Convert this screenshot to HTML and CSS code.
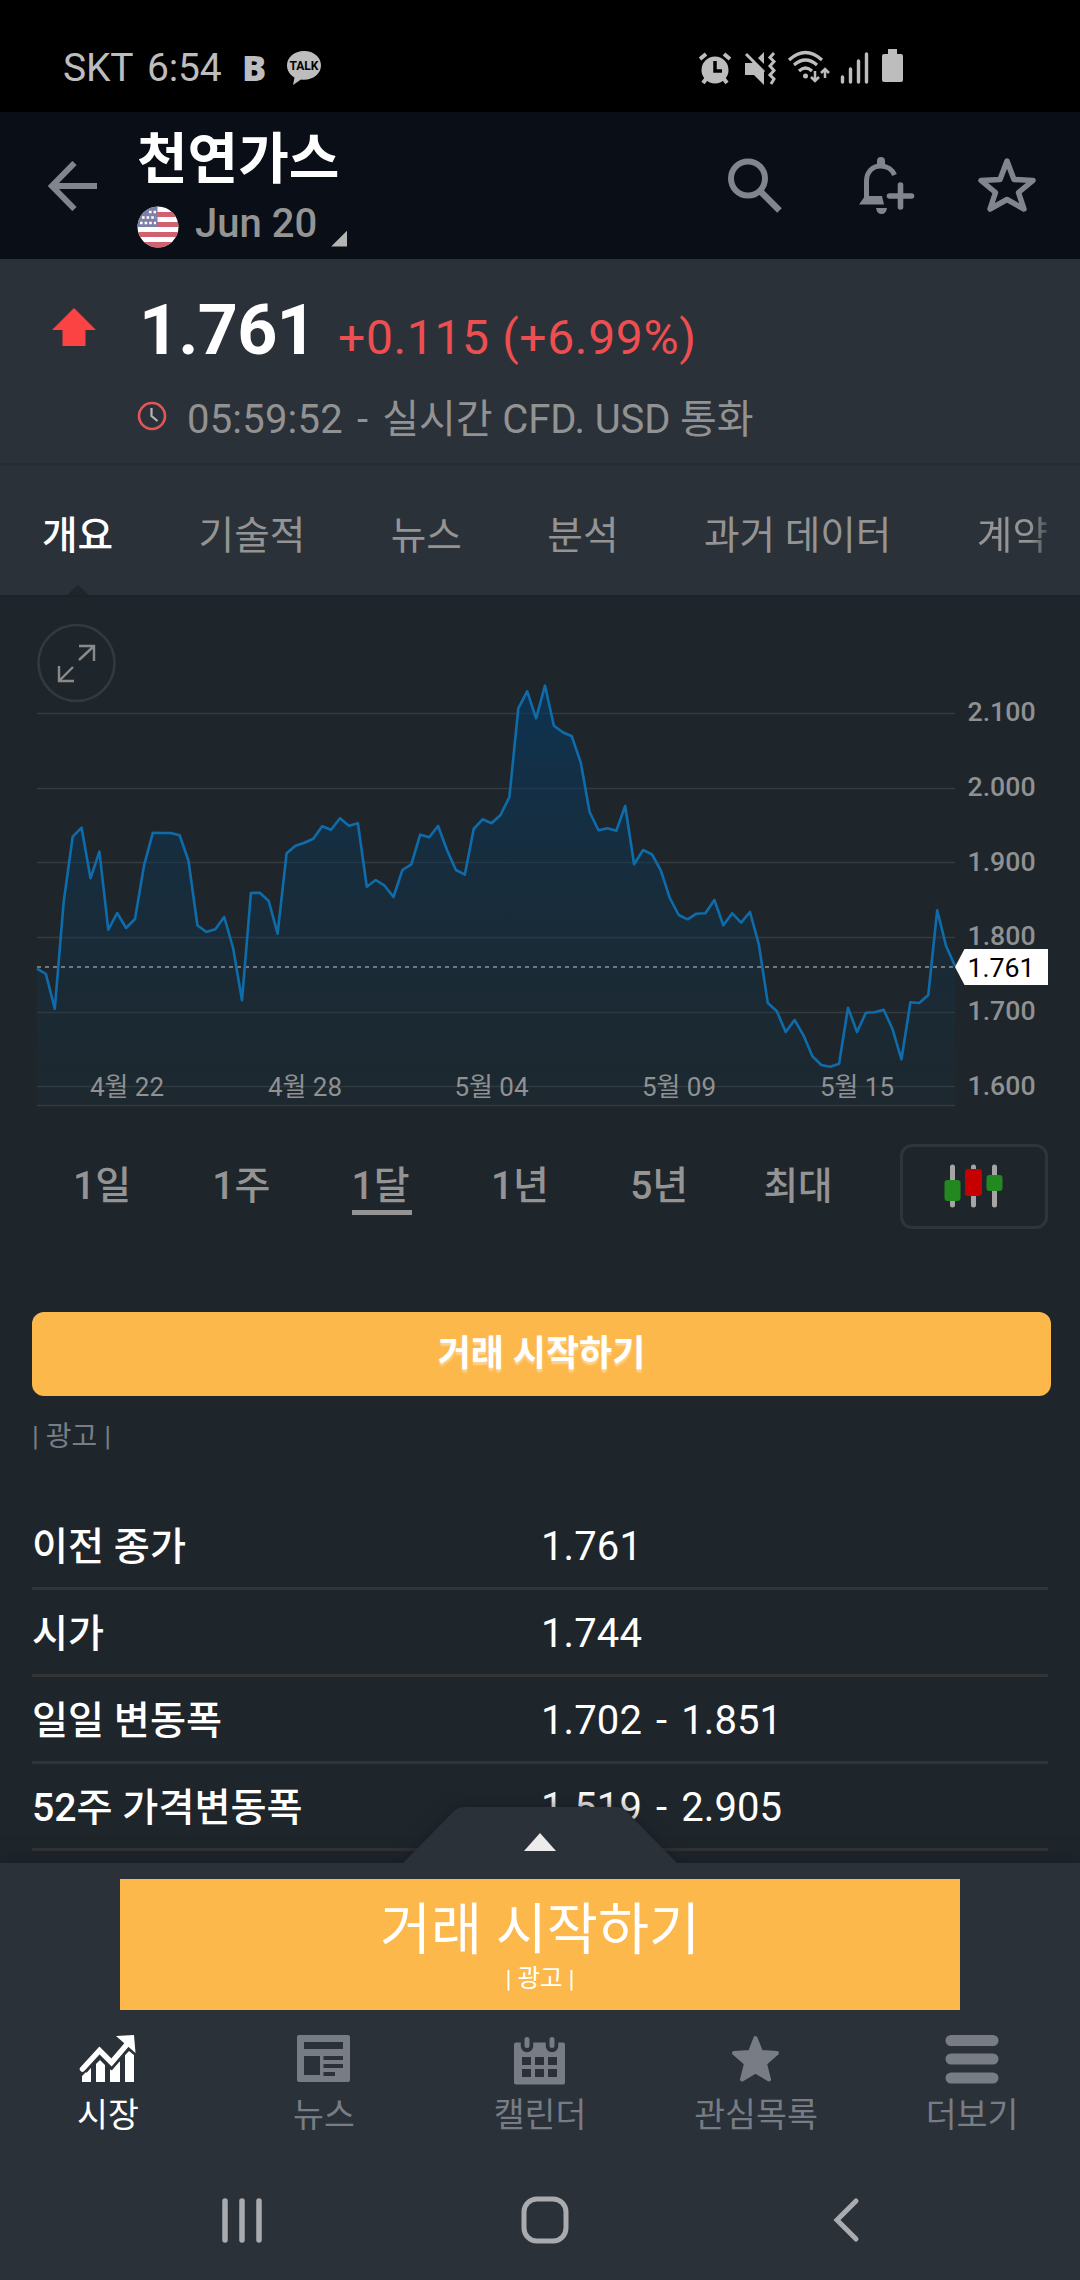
FILE: index.html
```html
<!DOCTYPE html>
<html lang="ko">
<head>
  <meta charset="UTF-8">
  <meta name="viewport" content="width=device-width, initial-scale=1.0">
  <title>천연가스</title>
  <link rel="stylesheet" href="styles.css">
</head>
<body>
  <div class="status-bar">
    <span class="carrier">SKT</span>
    <span class="time">6:54</span>
    <span class="band">B</span>
    <div class="talk">
      <svg width="36" height="36" viewBox="0 0 36 36"><path d="M18 1C8 1 1 7.500 1 15.500c0 5 3 9.500 7.500 12L7 35l8-5.500c1 .2 2 .3 3 .3 10 0 17-6.500 17-14.500S28 1 18 1z" fill="#bdbdbd"/></svg>
      <span>TALK</span>
    </div>
    <svg class="status-icons" width="210" height="40" viewBox="696 48 210 40" fill="#bdbdbd">
      <!-- alarm -->
      <circle cx="715" cy="71" r="13.500"/>
      <path d="M700 60l6-5M724 55l6 5M706 80l-3 4M724 80l3 4" stroke="#bdbdbd" stroke-width="4" fill="none"/>
      <path d="M715 62v10h7" stroke="#000" stroke-width="3.500" fill="none"/>
      <!-- mute / vibrate -->
      <path d="M745 64h7l2-2 10 10v14l-10-10h-9zM764 53v12l-6-6z"/>
      <path d="M746 55l18 18" stroke="#bdbdbd" stroke-width="3"/>
      <path d="M774 54l-4 4.500 4 4-4 4.500 4 4.500-4 4.500 4 4-3 5" stroke="#bdbdbd" stroke-width="3" fill="none"/>
      <!-- wifi -->
      <g stroke="#bdbdbd" stroke-width="3.200" fill="none">
        <path d="M789 61q16.500-15 33 0M794 66q11.500-10 23 0M799 72q6.500-6 13 0"/>
        <path d="M815 72v10M811 78l4 4 4-4M825 79v-9M821 74l4-4 4 4" stroke-width="2.500"/>
      </g>
      <circle cx="805.500" cy="77" r="2.500"/>
      <!-- signal -->
      <path d="M842.500 78v5M850.500 70v13M858.500 62v21M866.500 55v28" stroke="#bdbdbd" stroke-width="3.400" stroke-linecap="round"/>
      <!-- battery -->
      <path d="M888 50h9v5h4q2 0 2 2v24q0 2-2 2h-17q-2 0-2-2V57q0-2 2-2h4z"/>
    </svg>
  </div>

  <header class="header">
    <svg class="back" width="50" height="50" viewBox="0 0 50 50" fill="none" stroke="#80858e" stroke-width="6"><path d="M49 25H5M26.500 2L4 25l22.500 23"/></svg>
    <div class="titles">
      <h1>천연가스</h1>
      <div class="contract">
        <svg width="42" height="42" viewBox="0 0 42 42">
          <clipPath id="round"><circle cx="21" cy="21" r="20.500"/></clipPath>
          <g clip-path="url(#round)">
            <path d="M0 0h42v42H0z" fill="#fff"/>
            <path d="M0 8.500h42M0 18.500h42M0 28.500h42M0 38.500h42" stroke="#d2616f" stroke-width="5"/>
            <path d="M0 0h20.500v21H0z" fill="#7d7fa8"/>
            <path d="M12 6h7M5 11.500h14M3 17h16" stroke="#fff" stroke-width="2.600" stroke-dasharray="2.600 2"/>
          </g>
        </svg>
        <span>Jun 20</span>
        <i class="corner"></i>
      </div>
    </div>
    <div class="actions">
      <svg width="56" height="56" viewBox="0 0 56 56" fill="none" stroke="#80858e"><circle cx="21" cy="21.500" r="17" stroke-width="6"/><path d="M34 35l18.500 18.500" stroke-width="6.500"/></svg>
      <svg width="56" height="58" viewBox="0 0 56 58" fill="none" stroke="#80858e">
        <path d="M7.500 44V25c0-9 6-15 14-15 7 0 12 4 14 9" stroke-width="5"/>
        <path d="M18 11V5q0-4 4-4t4 4v6zM6 40h17l2 8.500H0zM17 52h11q-1 6-5.500 6T17 52z" fill="#80858e" stroke="none"/>
        <path d="M41.500 29v22M30.500 40h22" stroke-width="5.600" stroke-linecap="round"/>
      </svg>
      <svg width="58" height="56" viewBox="0 0 58 56" fill="none" stroke="#80858e" stroke-width="5.500" stroke-linejoin="round"><path d="M29 4l7 18.500 19 1-14.500 12L46 52 29 42.500 12 52l5.500-16.500L3 23.500l19-1z"/></svg>
    </div>
  </header>

  <section class="quote">
    <svg class="arrow-up" width="44" height="40" viewBox="0 0 44 40"><path d="M22 0l22 22H33.500v16h-23V22H0z" fill="#fc4343"/></svg>
    <div class="quote-body">
      <div class="price-row">
        <span class="price">1.761</span>
        <span class="change">+0.115 (+6.99%)</span>
      </div>
      <div class="quote-info">
        <svg width="30" height="30" viewBox="0 0 30 30" fill="none"><circle cx="15" cy="15" r="13" stroke="#e0565a" stroke-width="2.600"/><path d="M14.500 7v8l6 5" stroke="#b5b5b5" stroke-width="2.200"/></svg>
        <p><span class="quote-time">05:59:52 - </span>실시간 CFD. USD 통화</p>
      </div>
    </div>
  </section>

  <nav class="tabs">
    <a class="tab active">개요</a>
    <a class="tab">기술적</a>
    <a class="tab">뉴스</a>
    <a class="tab">분석</a>
    <a class="tab">과거 데이터</a>
    <a class="tab last">계약</a>
  </nav>

  <main class="content">
    <svg class="chart" width="1080" height="530" viewBox="0 597 1080 530">
      <defs>
        <linearGradient id="fade" gradientUnits="userSpaceOnUse" x1="0" y1="685" x2="0" y2="1105">
          <stop offset="0" stop-color="#033a69" stop-opacity=".62"/>
          <stop offset=".5" stop-color="#0d3553" stop-opacity=".4"/>
          <stop offset="1" stop-color="#10344a" stop-opacity=".12"/>
        </linearGradient>
      </defs>
      <path class="grid" d="M37 713.500h918M37 788.500h918M37 862.500h918M37 937.500h918M37 1012.500h918M37 1086.500h918M37 1105.500h918"/>
      <path id="area" fill="url(#fade)"/>
      <path class="current" d="M37 967h918"/>
      <path id="line" class="line"/>
      <g class="dates">
        <text x="127" y="1096">4월 22</text>
        <text x="305" y="1096">4월 28</text>
        <text x="491.500" y="1096">5월 04</text>
        <text x="679" y="1096">5월 09</text>
        <text x="857" y="1096">5월 15</text>
      </g>
      <g class="levels">
        <text x="967.500" y="721">2.100</text>
        <text x="967.500" y="796">2.000</text>
        <text x="967.500" y="871">1.900</text>
        <text x="967.500" y="945">1.800</text>
        <text x="967.500" y="1020">1.700</text>
        <text x="967.500" y="1095">1.600</text>
      </g>
      <path d="M955 967l9.500-18H1048v36h-83.500z" fill="#fff"/>
      <text class="badge" x="967.500" y="977">1.761</text>
      <circle cx="76.500" cy="663" r="38" fill="none" stroke="#343841" stroke-width="2.600"/>
      <path class="expand" d="M79 646h15v15M94 646l-15 14M59 666v15h15M59 681l14-14"/>
    </svg>

    <div class="ranges">
      <a>1일</a>
      <a>1주</a>
      <a class="selected">1달</a>
      <a>1년</a>
      <a>5년</a>
      <a class="max">최대</a>
      <button class="candles">
        <svg width="60" height="44" viewBox="0 0 60 44">
          <path d="M8.500 3v38M29.500 3v38M50.500 3v38" stroke="#a5a5a5" stroke-width="5" stroke-linecap="round"/>
          <rect x="0.500" y="16" width="16" height="21" rx="3" fill="#22881f"/>
          <rect x="21" y="5" width="17" height="27" rx="3" fill="#c60000"/>
          <rect x="42.500" y="11" width="16" height="16" rx="3" fill="#22881f"/>
        </svg>
      </button>
    </div>

    <button class="trade">거래 시작하기</button>
    <div class="ad-label">| 광고 |</div>

    <div class="stats">
      <div class="row"><span>이전 종가</span><b>1.761</b></div>
      <div class="row"><span>시가</span><b>1.744</b></div>
      <div class="row"><span>일일 변동폭</span><b>1.702 - 1.851</b></div>
      <div class="row"><span>52주 가격변동폭</span><b>1.519 - 2.905</b></div>
    </div>
  </main>

  <footer class="bottom">
    <svg class="handle" width="300" height="72" viewBox="390 1791 300 72">
      <path d="M403 1863l50-51q5-5 12-5h150q7 0 12 5l50 51z" fill="#2b3138"/>
      <path d="M540 1833l16 18h-32z" fill="#ececec"/>
    </svg>
    <div class="banner">
      <div class="banner-title">거래 시작하기</div>
      <div class="banner-ad">| 광고 |</div>
    </div>
    <div class="menu">
      <a class="menu-item active">
        <svg width="58" height="50" viewBox="0 0 58 50" fill="currentColor">
          <path d="M3 48v-6l9-9v15zM17 48V30l4-4 5 5v17zM31 48V36l10-9v21zM46 48V21l4-4 5 4v27z"/>
          <path d="M3.500 35l17-18.500 12 12L50 8" fill="none" stroke="#2b3138" stroke-width="11"/>
          <path d="M3.500 35l17-18.500 12 12L50 8" fill="none" stroke="currentColor" stroke-width="5.500" stroke-linecap="round"/>
          <path d="M37 2L55 1l1.500 18z"/>
        </svg>
        <span>시장</span>
      </a>
      <a class="menu-item">
        <svg width="58" height="50" viewBox="1 0 58 50">
          <rect x="3" y="1" width="53" height="47" rx="2" fill="currentColor"/>
          <path d="M10 8h39v7H10zM10 22h16v19H10zM29.500 22H49v4H29.500zM29.500 30H49v4H29.500zM29.500 38H41v4H29.500z" fill="#2b3138"/>
        </svg>
        <span>뉴스</span>
      </a>
      <a class="menu-item">
        <svg class="calendar" width="58" height="50" viewBox="0 0 58 50">
          <rect x="3" y="8.500" width="51" height="42" rx="2" fill="currentColor"/>
          <path d="M16 6v6M41 6v6" stroke="#2b3138" stroke-width="12.500" stroke-linecap="round"/>
          <path d="M16 5.500v6M41 5.500v6" stroke="currentColor" stroke-width="5" stroke-linecap="round"/>
          <path d="M11 23h9v8h-9zM24 23h9v8h-9zM37 23h9v8h-9zM11 35h9v8h-9zM24 35h9v8h-9zM37 35h9v8h-9z" fill="#2b3138"/>
        </svg>
        <span>캘린더</span>
      </a>
      <a class="menu-item">
        <svg width="58" height="50" viewBox="0 0 58 50" fill="currentColor" stroke="currentColor" stroke-width="4" stroke-linejoin="round"><path d="M28.500 4l5.500 14 16 1-12 10.500 4 16-13.500-8-13.500 8 4-16L7 19l16-1z"/></svg>
        <span>관심목록</span>
      </a>
      <a class="menu-item">
        <svg width="58" height="50" viewBox="0 0 58 50" stroke="currentColor" stroke-width="11" stroke-linecap="round"><path d="M8 6.500h42M8 25h42M8 44h42"/></svg>
        <span>더보기</span>
      </a>
    </div>
    <div class="system-nav">
      <svg width="42" height="48" viewBox="0 0 42 48" stroke="#a9abaf" stroke-width="5.500" stroke-linecap="round"><path d="M4 5v39M21 5v39M38 5v39"/></svg>
      <svg class="home" width="48" height="48" viewBox="0 0 48 48" fill="none" stroke="#a9abaf" stroke-width="5"><rect x="3" y="3" width="42" height="42" rx="13"/></svg>
      <svg width="28" height="48" viewBox="0 0 28 48" fill="none" stroke="#a9abaf" stroke-width="5" stroke-linecap="round"><path d="M24 5L5 24l19 19"/></svg>
    </div>
  </footer>

  <script>
    // one month of prices, as heights in thirds of a pixel
    const heights = [
      1106, 1122, 1226, 905, 710, 683, 835, 755, 989, 939, 984, 957, 797, 698, 699, 699, 706,
      782, 976, 996, 988, 951, 1044, 1201, 879, 878, 903, 1001, 760, 737, 728, 716, 679, 689,
      655, 677, 670, 860, 840, 857, 891, 810, 793, 704, 712, 678, 750, 810, 824, 687, 658, 670,
      645, 591, 325, 274, 355, 257, 377, 397, 409, 487, 636, 691, 685, 692, 618, 793, 750, 763,
      812, 894, 945, 958, 941, 940, 900, 976, 940, 968, 936, 1034, 1209, 1233, 1296, 1260, 1306,
      1369, 1395, 1400, 1391, 1223, 1296, 1238, 1237, 1229, 1288, 1378, 1207, 1209, 1185, 931,
      1038, 1098
    ];
    const step = 918 / (heights.length - 1);
    const points = heights.map((h, i) => (37 + i * step).toFixed(1) + " " + (600 + h / 3).toFixed(1));
    const path = "M" + points.join("L");

    document.getElementById("line").setAttribute("d", path);
    document.getElementById("area").setAttribute("d", path + "L955 1105L37 1105Z");
  </script>
</body>
</html>
```
FILE: styles.css
```css
* {
  box-sizing: border-box;
}

body {
  margin: 0;
  width: 1080px;
  height: 2280px;
  display: flex;
  flex-direction: column;
  overflow: hidden;
  background: #1f262b;
  color: #fff;
  font-family: Roboto, "Noto Sans CJK KR", sans-serif;
}

svg {
  display: block;
  flex-shrink: 0;
}

button {
  border: none;
  padding: 0;
  font-family: inherit;
}

/* Status bar */
.status-bar {
  height: 112px;
  flex-shrink: 0;
  display: flex;
  align-items: center;
  padding: 23px 174px 0 63px;
  background: #000;
  color: #bdbdbd;
  font-size: 39px;
  line-height: 48px;
}

.carrier {
  width: 84px;
  letter-spacing: -0.2px;
}

.time {
  width: 95px;
  letter-spacing: -0.2px;
}

.band {
  width: 44px;
  font-family: "Open Sans", sans-serif;
  font-size: 36px;
  font-weight: 800;
}

.talk {
  position: relative;
}

.talk span {
  position: absolute;
  left: 0;
  top: 8px;
  width: 36px;
  text-align: center;
  color: #000;
  font-size: 12px;
  font-weight: 700;
  line-height: 16px;
}

.status-icons {
  margin: -2px 0 0 auto;
}

/* Header */
.header {
  height: 147px;
  flex-shrink: 0;
  display: flex;
  align-items: center;
  padding: 0 44px 0 48px;
  background: #0a0e16;
}

.titles {
  margin-left: 39px;
}

h1 {
  margin: 0;
  height: 82px;
  font-size: 55px;
  font-weight: 700;
  line-height: 80px;
}

.contract {
  display: flex;
  align-items: center;
  height: 52px;
  color: #949494;
  font-size: 40px;
  font-weight: 500;
  line-height: 44px;
}

.contract span {
  height: 50px;
  margin-left: 16px;
}

.corner {
  margin: 24px 0 0 14px;
  width: 16px;
  height: 16px;
  background: #b4b4b4;
  clip-path: polygon(100% 0, 100% 100%, 0 100%);
}

.actions {
  display: flex;
  align-items: center;
  gap: 76px;
  margin: -1px 0 0 auto;
}

.actions svg + svg + svg {
  margin-left: -13px;
}

/* Quote */
.quote {
  height: 207px;
  flex-shrink: 0;
  display: flex;
  padding: 30px 0 0 52px;
  background: #2b3138;
  border-bottom: 3px solid #272c34;
}

.arrow-up {
  margin-top: 19px;
}

.quote-body {
  margin-left: 41px;
}

.price-row {
  display: flex;
  align-items: baseline;
  height: 82px;
  line-height: 82px;
}

.price {
  width: 201px;
  padding-left: 2px;
  font-size: 70px;
  font-weight: 700;
  letter-spacing: -0.8px;
}

.change {
  color: #ed4e50;
  font-size: 48px;
  letter-spacing: 0.65px;
}

.quote-info {
  display: flex;
  align-items: center;
  height: 89px;
  color: #929292;
  font-size: 40px;
  letter-spacing: -0.1px;
}

.quote-info p {
  margin: 0 0 0 20px;
}

.quote-time {
  letter-spacing: 0.2px;
  word-spacing: 4px;
}

/* Tabs */
.tabs {
  position: relative;
  height: 131px;
  flex-shrink: 0;
  display: flex;
  gap: 85.4px;
  padding: 0 32px 0 42px;
  background: #2b3138;
  border-bottom: 2px solid #1c212b;
}

.tab {
  color: #949494;
  font-size: 38.7px;
  line-height: 139px;
  white-space: nowrap;
}

.tab.active {
  color: #fff;
  font-weight: 500;
}

.tab.active::after {
  content: "";
  position: absolute;
  left: 67px;
  bottom: 0;
  width: 22px;
  height: 10px;
  background: #1f262b;
  clip-path: polygon(50% 0, 100% 100%, 0 100%);
}

.tab.last {
  background: linear-gradient(90deg, #949494 75%, #4b4f55);
  -webkit-background-clip: text;
  background-clip: text;
  color: transparent;
}

/* Chart */
.content {
  flex: 1;
  min-height: 0;
  overflow: hidden;
}

.grid {
  stroke: #363b40;
  stroke-width: 1.3;
}

.current {
  stroke: #8c949b;
  stroke-width: 1.5;
  stroke-dasharray: 4 4;
}

.line {
  fill: none;
  stroke: #0f6cab;
  stroke-width: 2.6;
  stroke-linejoin: round;
}

.dates {
  fill: #8f9193;
  font-size: 26px;
  text-anchor: middle;
}

.levels {
  fill: #8f9193;
  font-size: 26.7px;
  font-weight: 500;
}

.badge {
  fill: #000;
  font-size: 26.7px;
}

.expand {
  fill: none;
  stroke: #8a8a8a;
  stroke-width: 2.4;
}

.ranges {
  display: flex;
  align-items: center;
  height: 118px;
  padding: 0 32px 0 73px;
  color: #949494;
  font-size: 39px;
  font-weight: 500;
}

.ranges a {
  width: 60px;
  margin-right: 79.3px;
  height: 57px;
  line-height: 56px;
  white-space: nowrap;
}

.ranges .selected {
  border-bottom: 5px solid #949494;
}

.ranges .max {
  width: 70px;
  margin: 0 0 0 -6px;
  font-size: 37.5px;
}

.candles {
  display: flex;
  align-items: center;
  justify-content: center;
  width: 148px;
  height: 85px;
  margin-left: auto;
  border: 3px solid #2f343d;
  border-radius: 12px;
  background: none;
}

.trade {
  display: block;
  width: 1019px;
  height: 84px;
  margin: 67px 0 0 32px;
  border-radius: 12px;
  background: #fcb84a;
  color: #fff;
  font-size: 36px;
  font-weight: 700;
  line-height: 77px;
  text-shadow: 0 3px 2px rgba(255, 255, 255, 0.4);
}

.ad-label {
  height: 107px;
  padding: 21px 0 0 32px;
  color: #787d86;
  font-size: 28px;
  line-height: 40px;
}

.stats {
  margin: 0 32px;
}

.row {
  display: flex;
  height: 87px;
  border-bottom: 3px solid #313334;
  font-size: 40px;
  line-height: 88px;
}

.row span {
  width: 509px;
  font-size: 39.2px;
  font-weight: 500;
}

.row b {
  font-weight: 400;
  word-spacing: 4px;
  letter-spacing: 0.1px;
}

/* Bottom panel */
.bottom {
  position: relative;
  height: 417px;
  flex-shrink: 0;
  padding-top: 16px;
  background: #2b3138;
  box-shadow: 0 0 18px rgba(20, 22, 34, 0.8);
}

.handle {
  position: absolute;
  left: 390px;
  top: -72px;
  filter: drop-shadow(0 -3px 7px rgba(20, 22, 34, 0.5));
  clip-path: inset(0 0 0 0);
}

.banner {
  width: 840px;
  height: 131px;
  margin: 0 auto;
  background: #fcb84a;
  text-align: center;
}

.banner-title {
  height: 84px;
  font-size: 55.5px;
  line-height: 103px;
}

.banner-ad {
  font-size: 24.5px;
  line-height: 32px;
}

.menu {
  display: flex;
  padding-top: 24px;
}

.menu-item {
  width: 216px;
  display: flex;
  flex-direction: column;
  align-items: center;
  color: #777c85;
  font-size: 33.6px;
  line-height: 56px;
}

.menu-item svg {
  margin-bottom: 4px;
}

.menu-item.active {
  color: #fff;
}

.calendar {
  overflow: visible;
}

.system-nav {
  display: flex;
  justify-content: space-between;
  margin-top: 52px;
  padding: 0 220px 0 221px;
}

.home {
  margin-right: 6px;
}
```
